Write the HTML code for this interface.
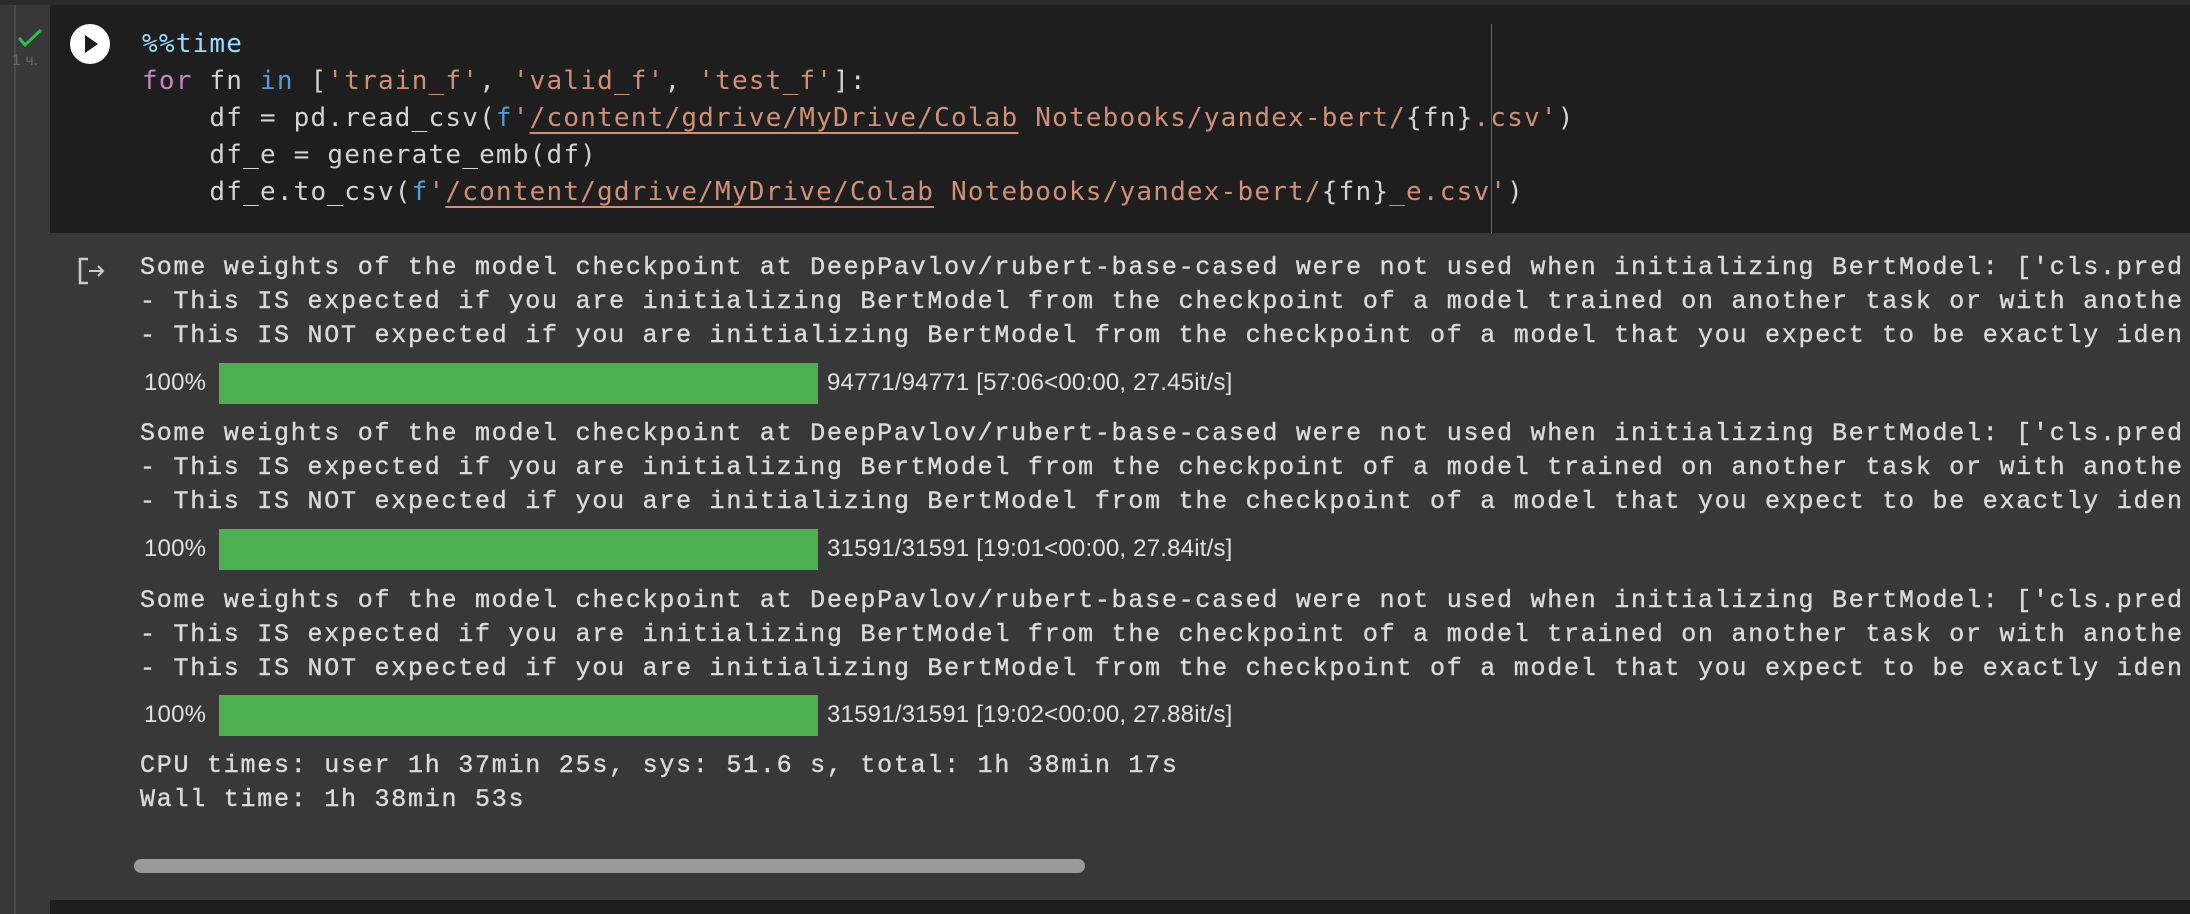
<!DOCTYPE html>
<html><head><meta charset="utf-8"><style>
html,body{margin:0;padding:0;}
body{width:2190px;height:914px;background:#383838;position:relative;overflow:hidden;}
.a{position:absolute;white-space:pre;}
.code{font-family:"DejaVu Sans Mono","Liberation Mono",monospace;font-size:26px;letter-spacing:1.2px;color:#d4d4d4;line-height:37px;}
.out{font-family:"Liberation Mono",monospace;font-size:25px;letter-spacing:1.75px;color:#dadada;line-height:34px;-webkit-text-stroke:0.4px #dadada;}
.pt{font-family:"Liberation Sans",sans-serif;font-size:24px;color:#e0e0e0;letter-spacing:0.2px;}
.k{color:#c586c0}.b{color:#569cd6}.s{color:#ce9178}.m{color:#9cdcfe}
.u{text-decoration:underline;text-decoration-color:#ce9178;text-underline-offset:6px;}
.bar{position:absolute;left:219px;width:599px;height:41px;background:#4caf50;}
</style></head><body>
<div class="a" style="left:0;top:0;width:2190px;height:5px;background:#2a2a2a"></div>
<div class="a" style="left:14px;top:5px;width:2px;height:909px;background:#4a4a4a"></div>
<div class="a" style="left:50px;top:5px;width:2140px;height:228px;background:#1e1e1e"></div>
<div class="a" style="left:1491px;top:24px;width:1px;height:209px;background:#666"></div>
<svg class="a" style="left:16px;top:28px" width="28" height="20"><path d="M3 10 L9 17 L25 2" stroke="#2ebd4c" stroke-width="3" fill="none"/></svg>
<div class="a" style="left:12px;top:52px;font:16px 'Liberation Sans',sans-serif;color:#666">1 ч.</div>
<svg class="a" style="left:69px;top:23px" width="42" height="42"><circle cx="21" cy="21" r="20" fill="#fff"/><path d="M16 12 L29 21 L16 30 Z" fill="#1e1e1e"/></svg>
<div class="a code" style="left:142px;top:26px"><span class="m">%%time</span>
<span class="k">for</span> fn <span class="b">in</span> [<span class="s">'train_f'</span>, <span class="s">'valid_f'</span>, <span class="s">'test_f'</span>]:
    df = pd.read_csv(<span class="b">f</span><span class="s">'<span class="u">/content/gdrive/MyDrive/Colab</span> Notebooks/yandex-bert/</span>{fn}<span class="s">.csv'</span>)
    df_e = generate_emb(df)
    df_e.to_csv(<span class="b">f</span><span class="s">'<span class="u">/content/gdrive/MyDrive/Colab</span> Notebooks/yandex-bert/</span>{fn}<span class="s">_e.csv'</span>)</div>
<svg class="a" style="left:77px;top:256px" width="30" height="30"><path d="M11 3 H3 V27 H11" stroke="#ccc" stroke-width="2.5" fill="none"/><path d="M12 15 H26 M21 10 L26 15 L21 20" stroke="#ccc" stroke-width="2" fill="none"/></svg>
<div class="a out" style="left:140px;top:251px">Some weights of the model checkpoint at DeepPavlov/rubert-base-cased were not used when initializing BertModel: ['cls.pred
- This IS expected if you are initializing BertModel from the checkpoint of a model trained on another task or with anothe
- This IS NOT expected if you are initializing BertModel from the checkpoint of a model that you expect to be exactly iden</div>
<div class="a pt" style="left:144px;top:369px">100%</div><div class="bar" style="top:363px"></div><div class="a pt" style="left:827px;top:369px">94771/94771 [57:06&lt;00:00, 27.45it/s]</div>
<div class="a out" style="left:140px;top:417px">Some weights of the model checkpoint at DeepPavlov/rubert-base-cased were not used when initializing BertModel: ['cls.pred
- This IS expected if you are initializing BertModel from the checkpoint of a model trained on another task or with anothe
- This IS NOT expected if you are initializing BertModel from the checkpoint of a model that you expect to be exactly iden</div>
<div class="a pt" style="left:144px;top:535px">100%</div><div class="bar" style="top:529px"></div><div class="a pt" style="left:827px;top:535px">31591/31591 [19:01&lt;00:00, 27.84it/s]</div>
<div class="a out" style="left:140px;top:584px">Some weights of the model checkpoint at DeepPavlov/rubert-base-cased were not used when initializing BertModel: ['cls.pred
- This IS expected if you are initializing BertModel from the checkpoint of a model trained on another task or with anothe
- This IS NOT expected if you are initializing BertModel from the checkpoint of a model that you expect to be exactly iden</div>
<div class="a pt" style="left:144px;top:701px">100%</div><div class="bar" style="top:695px"></div><div class="a pt" style="left:827px;top:701px">31591/31591 [19:02&lt;00:00, 27.88it/s]</div>
<div class="a out" style="left:140px;top:749px">CPU times: user 1h 37min 25s, sys: 51.6 s, total: 1h 38min 17s
Wall time: 1h 38min 53s</div>
<div class="a" style="left:134px;top:859px;width:951px;height:14px;border-radius:7px;background:#9a9a9a"></div>
<div class="a" style="left:50px;top:900px;width:2140px;height:14px;background:#1e1e1e"></div>
</body></html>
